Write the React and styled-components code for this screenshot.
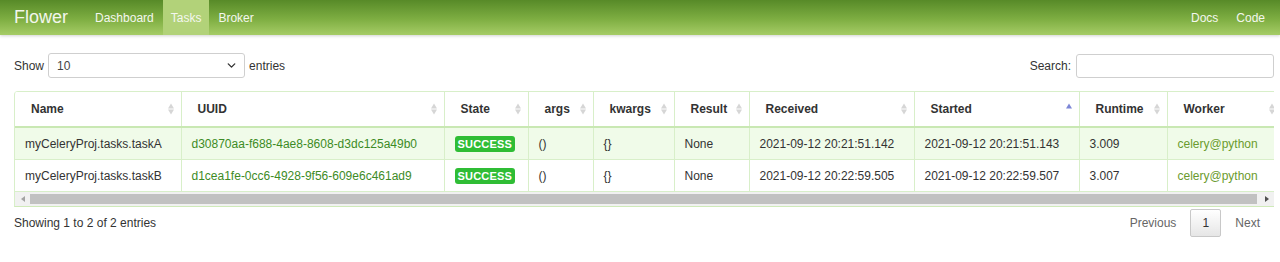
import React from "react";
import styled, { createGlobalStyle } from "styled-components";
import { ChevronDown } from "lucide-react";

const GlobalStyle = createGlobalStyle`
  body {
    margin: 0;
    font-family: "Liberation Sans", Arial, sans-serif;
    font-size: 12px;
    color: #333;
    background: #fff;
  }
`;

const columns = [
  { key: "name", title: "Name", width: 166 },
  { key: "uuid", title: "UUID", width: 263, link: true },
  { key: "state", title: "State", width: 84 },
  { key: "args", title: "args", width: 65 },
  { key: "kwargs", title: "kwargs", width: 81 },
  { key: "result", title: "Result", width: 75 },
  { key: "received", title: "Received", width: 165 },
  { key: "started", title: "Started", width: 165, sorted: true },
  { key: "runtime", title: "Runtime", width: 88 },
  { key: "worker", title: "Worker", width: 115, worker: true },
];

const tasks = [
  {
    name: "myCeleryProj.tasks.taskA",
    uuid: "d30870aa-f688-4ae8-8608-d3dc125a49b0",
    state: "SUCCESS",
    args: "()",
    kwargs: "{}",
    result: "None",
    received: "2021-09-12 20:21:51.142",
    started: "2021-09-12 20:21:51.143",
    runtime: "3.009",
    worker: "celery@python",
  },
  {
    name: "myCeleryProj.tasks.taskB",
    uuid: "d1cea1fe-0cc6-4928-9f56-609e6c461ad9",
    state: "SUCCESS",
    args: "()",
    kwargs: "{}",
    result: "None",
    received: "2021-09-12 20:22:59.505",
    started: "2021-09-12 20:22:59.507",
    runtime: "3.007",
    worker: "celery@python",
  },
];

const Navbar = styled.nav`
  height: 35px;
  display: flex;
  align-items: stretch;
  justify-content: space-between;
  padding: 0 6px 0 14px;
  background: linear-gradient(to bottom, #578a28 0%, #7eae42 55%, #a6cc66 100%);
  box-shadow: 0 1px 3px rgba(0, 0, 0, 0.18);
`;

const NavGroup = styled.div`
  display: flex;
  align-items: stretch;
`;

const Brand = styled.a`
  display: flex;
  align-items: center;
  font-size: 18px;
  color: #f2f6ec;
  margin-right: 18px;
  text-decoration: none;
`;

const NavLink = styled.a`
  display: flex;
  align-items: center;
  padding: 0 ${(p) => (p.$active ? "8px" : "9px")};
  font-size: 12px;
  color: #f4f7ef;
  text-decoration: none;
  background: ${(p) => (p.$active ? "#b2d279" : "transparent")};
`;

const Content = styled.main`
  padding: 18px 6px 0 14px;
`;

const Controls = styled.div`
  display: flex;
  justify-content: space-between;
  align-items: center;
  height: 25px;
`;

const Label = styled.label`
  display: flex;
  align-items: center;
  gap: ${(p) => (p.$tight ? "4px" : "5px")};
  color: #333;
`;

const Select = styled.div`
  width: 197px;
  height: 25px;
  box-sizing: border-box;
  border: 1px solid #cfcfcf;
  border-radius: 3px;
  display: flex;
  align-items: center;
  justify-content: space-between;
  padding: 0 6px 0 8px;
  color: #444;
  svg {
    color: #333;
  }
`;

const SearchInput = styled.input`
  width: 198px;
  height: 24px;
  box-sizing: border-box;
  border: 1px solid #cfcfcf;
  border-radius: 3px;
  outline: none;
`;

const TableWrap = styled.div`
  margin-top: 13px;
  overflow: hidden;
  border-left: 1px solid #d8efc9;
  border-bottom: 1px solid #cfeab9;
  border-top-left-radius: 4px;
`;

const Table = styled.table`
  border-collapse: collapse;
  table-layout: fixed;
  width: 1267px;
`;

const Th = styled.th`
  position: relative;
  height: 34px;
  padding: 0 20px 0 16px;
  text-align: left;
  font-weight: bold;
  color: #333;
  border-top: 1px solid #d8efc9;
  border-right: 1px solid #d8efc9;
  border-bottom: 2px solid #c9e8b3;
  white-space: nowrap;
`;

const SortIcon = styled.span`
  position: absolute;
  right: 7px;
  top: 50%;
  transform: translateY(-50%);
  display: flex;
  flex-direction: column;
  gap: 1px;
  &::before,
  &::after {
    content: "";
    border-left: 3.5px solid transparent;
    border-right: 3.5px solid transparent;
  }
  &::before {
    border-bottom: 5px solid ${(p) => (p.$asc ? "#7c86d6" : "#d6d6d6")};
  }
  &::after {
    border-top: 5px solid ${(p) => (p.$asc ? "transparent" : "#d6d6d6")};
  }
`;

const Row = styled.tr`
  background: ${(p) => (p.$odd ? "#f0fbe9" : "#fff")};
`;

const Td = styled.td`
  height: 31px;
  padding: 0 10px;
  border-right: 1px solid #d8efc9;
  border-bottom: 1px solid #d8efc9;
  white-space: nowrap;
  overflow: hidden;
  color: ${(p) => (p.$link ? "#3d8b26" : p.$worker ? "#6b9b2e" : "#333")};
`;

const Badge = styled.span`
  display: inline-block;
  background: #2fbd35;
  color: #fff;
  font-weight: bold;
  font-size: 11px;
  padding: 2px 3px 2px;
  border-radius: 3px;
  letter-spacing: 0.2px;
`;

const Scrollbar = styled.div`
  display: flex;
  height: 14px;
  background: #f1f1f1;
`;

const ScrollArrow = styled.div`
  width: 15px;
  display: flex;
  align-items: center;
  justify-content: center;
  &::before {
    content: "";
    border-top: 3.5px solid transparent;
    border-bottom: 3.5px solid transparent;
    ${(p) =>
      p.$right
        ? "border-left: 4px solid #505050;"
        : "border-right: 4px solid #a3a3a3;"}
  }
`;

const Thumb = styled.div`
  flex: 1;
  margin: 2px 2px 2px 0;
  background: #c1c1c1;
`;

const Footer = styled.div`
  display: flex;
  justify-content: space-between;
  align-items: center;
  margin-top: 2px;
`;

const Info = styled.div`
  color: #333;
`;

const Pagination = styled.div`
  display: flex;
  align-items: center;
`;

const PageLink = styled.span`
  padding: 0 14px 0 ${(p) => (p.$next ? "14px" : "0")};
  color: #666;
`;

const PageButton = styled.span`
  width: 31px;
  height: 28px;
  box-sizing: border-box;
  display: flex;
  align-items: center;
  justify-content: center;
  border: 1px solid #c8c8c8;
  border-radius: 2px;
  background: linear-gradient(to bottom, #fff 0%, #e6e6e6 100%);
  color: #333;
`;

export default function App() {
  return (
    <>
      <GlobalStyle />
      <Navbar>
        <NavGroup>
          <Brand>Flower</Brand>
          <NavLink>Dashboard</NavLink>
          <NavLink $active>Tasks</NavLink>
          <NavLink>Broker</NavLink>
        </NavGroup>
        <NavGroup>
          <NavLink>Docs</NavLink>
          <NavLink>Code</NavLink>
        </NavGroup>
      </Navbar>
      <Content>
        <Controls>
          <Label $tight>
            Show
            <Select>
              <span>10</span>
              <ChevronDown size={13} strokeWidth={2.5} />
            </Select>
            entries
          </Label>
          <Label>
            Search:
            <SearchInput type="search" />
          </Label>
        </Controls>
        <TableWrap>
          <Table>
            <colgroup>
              {columns.map((c) => (
                <col key={c.key} style={{ width: c.width }} />
              ))}
            </colgroup>
            <thead>
              <tr>
                {columns.map((c) => (
                  <Th key={c.key}>
                    {c.title}
                    <SortIcon $asc={c.sorted} />
                  </Th>
                ))}
              </tr>
            </thead>
            <tbody>
              {tasks.map((t, i) => (
                <Row key={t.uuid} $odd={i % 2 === 0}>
                  {columns.map((c) => (
                    <Td key={c.key} $link={c.link} $worker={c.worker}>
                      {c.key === "state" ? <Badge>{t.state}</Badge> : t[c.key]}
                    </Td>
                  ))}
                </Row>
              ))}
            </tbody>
          </Table>
          <Scrollbar>
            <ScrollArrow />
            <Thumb />
            <ScrollArrow $right />
          </Scrollbar>
        </TableWrap>
        <Footer>
          <Info>Showing 1 to 2 of 2 entries</Info>
          <Pagination>
            <PageLink>Previous</PageLink>
            <PageButton>1</PageButton>
            <PageLink $next>Next</PageLink>
          </Pagination>
        </Footer>
      </Content>
    </>
  );
}
